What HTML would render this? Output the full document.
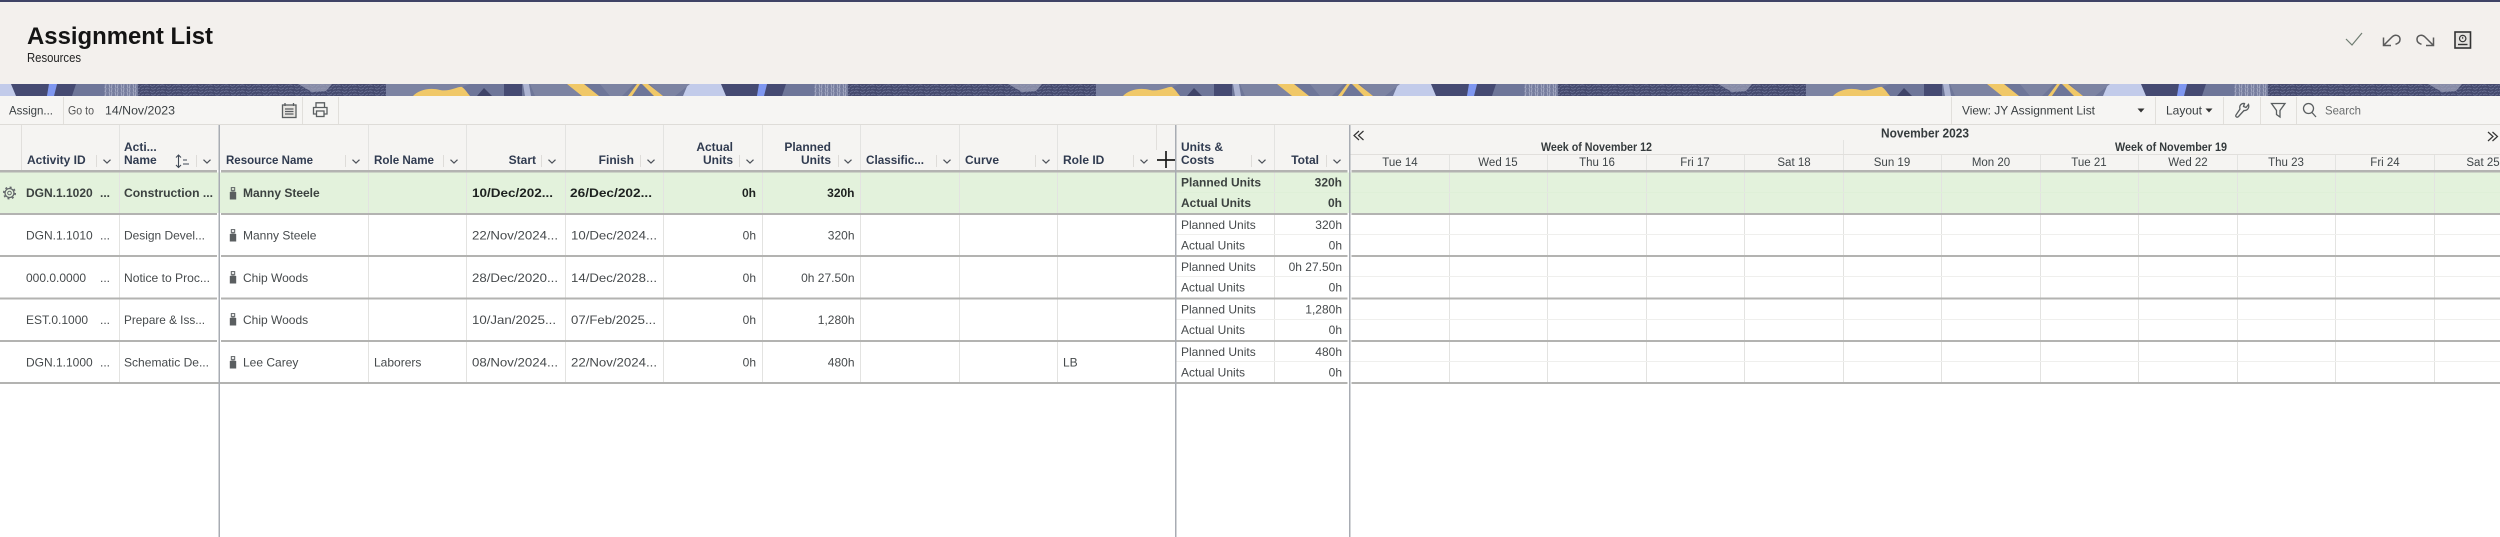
<!DOCTYPE html>
<html><head><meta charset="utf-8"><title>Assignment List</title>
<style>
html,body{margin:0;padding:0;background:#fff;width:2500px;height:537px;overflow:hidden}
svg{display:block;font-family:"Liberation Sans",sans-serif;filter:blur(.35px)}
.h{font-size:12px;font-weight:700;fill:#303b50}
.d{font-size:12px;fill:#464a4c}
.b{font-size:12px;font-weight:700;fill:#3c4240}
.k{font-size:12px;font-weight:700;fill:#1e2220}
.t{font-size:12px;fill:#3a3f42}
.g{font-size:11.5px;fill:#3f4548}
.gb{font-size:12px;font-weight:700;fill:#353b3d}
.e{text-anchor:end}
.m{text-anchor:middle}
.ic{fill:none;stroke:#5a5e60;stroke-width:1.3}
</style></head><body>
<svg width="2500" height="537" viewBox="0 0 2500 537" xmlns="http://www.w3.org/2000/svg">
<defs>
<pattern id="tx" width="16" height="6" patternUnits="userSpaceOnUse"><rect width="16" height="6" fill="#454a6e"/><path d="M0 2C1.500 .6 3 .6 4.500 1.800M6 1.200C8 2.800 9 2.600 11 1M12 2.600L15.500 .8M1 5C2.500 3.600 4 3.800 5.500 4.800M7 4.400C9 5.600 10 5.400 12 3.800M13 5.400L16 4" stroke="#70779a" stroke-width=".7" fill="none"/></pattern>
<pattern id="tl" width="6" height="4" patternUnits="userSpaceOnUse"><rect width="6" height="4" fill="#777e9f"/><path d="M1 0L2 4M4 0L3.500 4" stroke="#aeb3cb" stroke-width=".8"/></pattern>
<pattern id="tile" width="710" height="12" patternUnits="userSpaceOnUse" x="0" y="84">
<rect width="710" height="12" fill="#6e7699"/>
<path d="M0 0H13L20 12H0ZM688 0H710V12H683Z" fill="#c2cbea"/>
<path d="M11 0H49L47 12H16ZM57 0H76L72 12H54Z" fill="#454a72"/>
<path d="M49 0H57L54 12H47Z" fill="#7f97f0"/>
<rect x="104" width="36" height="12" fill="url(#tl)"/>
<rect x="138" width="248" height="12" fill="url(#tx)"/>
<path d="M298 0H332L326 7 312 8Z" fill="#a4a9c0" opacity=".7"/>
<path d="M386 0H470L440 12H386ZM530 0H566L590 12H535ZM600 0H634L622 12H610ZM650 0H690L675 12H662Z" fill="#7c83a2"/>
<path d="M413 12C418 6 430 3 440 6C450 8 458 2 462 3C466 6 468 10 470 12Z" fill="#f0c868"/>
<path d="M477 12L484 4 492 12Z" fill="#3f4468"/>
<path d="M504 0H522V12H504Z" fill="#454a72"/>
<path d="M523 0H529L531 12H525Z" fill="#adb4d2"/>
<path d="M567 0H584L599 12H582ZM628 12L637 0H640L632 12ZM642 0H648L663 12H654Z" fill="#f0c868"/>
</pattern>
<g id="p"><path d="M2.300 .6H5.700V3.400H2.300Z" fill="none" stroke="#5a5e60" stroke-width="1"/><path d="M.8 5Q4 3.400 7.200 5V12.500H.8Z" fill="#5a5e60"/></g>
<g id="v"><path d="M-3.500 -1.800L0 1.600 3.500 -1.800" fill="none" stroke="#4b5058" stroke-width="1.200"/></g>
</defs>

<!-- page header -->
<rect width="2500" height="84" fill="#f3f0ed"/>
<rect width="2500" height="2" fill="#3f4466"/>
<text x="27" y="44" font-size="24" font-weight="700" fill="#141414" textLength="186" lengthAdjust="spacingAndGlyphs">Assignment List</text>
<text x="27" y="62" font-size="12.500" fill="#222" textLength="54" lengthAdjust="spacingAndGlyphs">Resources</text>
<path d="M2346 39L2352 45 2362 33" fill="none" stroke="#6f7d72" stroke-width="1.200"/>
<path d="M2383.500 37.500V45.500H2391M2383.500 45.500L2392 37C2395 34 2400 35 2400 39.500C2400 41.800 2398 43.500 2395.500 44.300" fill="none" stroke="#5a5a5a" stroke-width="1.500"/>
<path d="M2433.500 37.500V45.500H2426M2433.500 45.500L2425 37C2422 34 2417 35 2417 39.500C2417 41.800 2419 43.500 2421.500 44.300" fill="none" stroke="#5a5a5a" stroke-width="1.500"/>
<rect x="2455" y="32" width="15.500" height="16" fill="#e6e4e1" stroke="#333" stroke-width="1.600"/>
<circle cx="2462.700" cy="38.500" r="3.200" fill="none" stroke="#333" stroke-width="1.200"/>
<path d="M2458 44.500H2467.500" stroke="#333" stroke-width="1.400"/>
<path d="M2462.700 36.800V38.800" stroke="#333"/>

<!-- banner -->
<rect y="84" width="2500" height="12" fill="url(#tile)"/>

<!-- toolbar -->
<rect y="96" width="2500" height="29" fill="#f6f5f3"/>
<rect y="124" width="2500" height="1" fill="#dedcd8"/>
<path d="M63.500 97V124M302.500 97V124M338.500 97V124M1951.500 97V124M2155.500 97V124M2223.500 97V124M2260.500 97V124M2296.500 97V124" stroke="#e1dfdb"/>
<text x="9" y="114.500" class="t" textLength="44" lengthAdjust="spacingAndGlyphs">Assign...</text>
<text x="68" y="114.500" class="t" style="fill:#555" textLength="26" lengthAdjust="spacingAndGlyphs">Go to</text>
<text x="105" y="114.500" class="t" textLength="70" lengthAdjust="spacingAndGlyphs">14/Nov/2023</text>
<g class="ic"><rect x="282.500" y="105" width="13.500" height="12.500" fill="#e8e6e2"/><path d="M285 103V106M293.500 103V106M285 109H293.500M285 111.500H293.500M285 114H293.500"/></g>
<g class="ic"><path d="M316 107V102.800H324.500V107M316 114H313.500V107.500H327V114H324.500"/><rect x="316.500" y="111" width="7.500" height="5.500"/></g>
<text x="1962" y="114.500" class="t" textLength="133" lengthAdjust="spacingAndGlyphs">View: JY Assignment List</text>
<path d="M2137.500 108.500H2144.500L2141 112.500Z" fill="#333"/>
<text x="2166" y="114.500" class="t" textLength="36" lengthAdjust="spacingAndGlyphs">Layout</text>
<path d="M2205.500 108.500H2212.500L2209 112.500Z" fill="#333"/>
<path class="ic" d="M2236 115C2235 116.500 2237 118 2238.500 116.500L2244 110.500C2247.500 111 2249.500 107.500 2248.500 104.500L2246 107.500 2243.500 106.500 2244.500 103.500C2241 103 2239 106 2240 109Z"/>
<path class="ic" d="M2271.500 103.500H2285L2280 110.500V117L2276.500 114.500V110.500Z"/>
<circle class="ic" cx="2308.500" cy="108.500" r="5"/><path class="ic" d="M2312 112.500L2316 117"/>
<text x="2325" y="114.500" class="t" style="fill:#6a6d6e" textLength="36" lengthAdjust="spacingAndGlyphs">Search</text>

<!-- column header background -->
<rect y="125" width="2500" height="45" fill="#f5f4f2"/>

<!-- selected row background -->
<rect y="172" width="2500" height="41" fill="#e3f2dc"/>

<!-- vertical column lines: headers + rows -->
<path d="M21.500 125V170M1156.500 125V150" stroke="#e1dfdc"/>
<path d="M119.500 125V382M368.500 125V382M466.500 125V382M565.500 125V382M663.500 125V382M762.500 125V382M860.500 125V382M959.500 125V382M1057.500 125V382M1274.500 125V382M1449.500 154V382M1547.500 154V382M1646.500 154V382M1744.500 154V382M1843.500 140V382M1941.500 154V382M2040.500 154V382M2138.500 154V382M2237.500 154V382M2335.500 154V382M2434.500 154V382" stroke="#e3e3e1"/>

<!-- gantt header line -->
<rect x="1350" y="154" width="1150" height="1" fill="#e1dfdc"/>

<!-- sub-row lines -->
<path d="M1176 192.500H2500" stroke="#dff0d8"/>
<path d="M1176 234.500H2500M1176 276.500H2500M1176 319.500H2500M1176 361.500H2500" stroke="#efefed"/>

<!-- horizontal thick lines -->
<g fill="#b3b3b1">
<rect y="170" width="2500" height="2.500"/>
<rect y="213" width="2500" height="2"/>
<rect y="255" width="2500" height="2"/>
<rect y="297.500" width="2500" height="2"/>
<rect y="340" width="2500" height="2"/>
<rect y="382" width="2500" height="2"/>
</g>
<!-- gaps in horizontal lines around dividers -->
<g fill="#fff">
<rect x="217" y="170" width="4" height="2.500"/><rect x="217" y="213" width="4" height="2"/><rect x="217" y="255" width="4" height="2"/><rect x="217" y="297.500" width="4" height="2"/><rect x="217" y="340" width="4" height="2"/>
<rect x="1347.500" y="170" width="4" height="2.500"/><rect x="1347.500" y="213" width="4" height="2"/><rect x="1347.500" y="255" width="4" height="2"/><rect x="1347.500" y="297.500" width="4" height="2"/><rect x="1347.500" y="340" width="4" height="2"/><rect x="1347.500" y="382" width="4" height="2"/>
</g>

<!-- thick vertical dividers -->
<g fill="#a8acb3">
<rect x="218.500" y="125" width="1.500" height="412"/>
<rect x="1175" y="125" width="1.500" height="412"/>
<rect x="1349" y="125" width="1.500" height="412"/>
</g>

<!-- column header text -->
<text x="124" y="151" class="h">Acti...</text>
<text x="124" y="164" class="h">Name</text>
<text x="27" y="164" class="h">Activity ID</text>
<text x="226" y="164" class="h" textLength="87" lengthAdjust="spacingAndGlyphs">Resource Name</text>
<text x="374" y="164" class="h" textLength="60" lengthAdjust="spacingAndGlyphs">Role Name</text>
<text x="536" y="164" class="h e">Start</text>
<text x="634" y="164" class="h e">Finish</text>
<text x="733" y="151" class="h e">Actual</text>
<text x="733" y="164" class="h e">Units</text>
<text x="831" y="151" class="h e">Planned</text>
<text x="831" y="164" class="h e">Units</text>
<text x="866" y="164" class="h" textLength="58" lengthAdjust="spacingAndGlyphs">Classific...</text>
<text x="965" y="164" class="h">Curve</text>
<text x="1063" y="164" class="h">Role ID</text>
<text x="1181" y="151" class="h">Units &amp;</text>
<text x="1181" y="164" class="h">Costs</text>
<text x="1319" y="164" class="h e">Total</text>

<!-- sort icon -->
<path d="M178.500 155.500V167M176 157.500L178.500 155 181 157.500M176 165L178.500 167.500 181 165M183 160H187M183 164H189" fill="none" stroke="#3f4855" stroke-width="1.100"/>

<!-- header separators -->
<path d="M96.500 155V167M196.500 155V167M345.500 155V167M443.500 155V167M541.500 155V167M640.500 155V167M739.500 155V167M838.500 155V167M936.500 155V167M1035.500 155V167M1133.500 155V167M1251.500 155V167M1326.500 155V167" stroke="#dedcd9"/>
<!-- chevrons -->
<use href="#v" x="107" y="161.500"/><use href="#v" x="207" y="161.500"/><use href="#v" x="356" y="161.500"/><use href="#v" x="454" y="161.500"/><use href="#v" x="552" y="161.500"/><use href="#v" x="651" y="161.500"/><use href="#v" x="750" y="161.500"/><use href="#v" x="848" y="161.500"/><use href="#v" x="947" y="161.500"/><use href="#v" x="1046" y="161.500"/><use href="#v" x="1144" y="161.500"/><use href="#v" x="1262" y="161.500"/><use href="#v" x="1337" y="161.500"/>

<!-- plus cursor -->
<path d="M1166 151V168M1157 160H1175" stroke="#1c1c1c" stroke-width="1.700"/>

<!-- gantt header -->
<text x="1925" y="137.500" class="gb m" style="font-size:13px" textLength="88" lengthAdjust="spacingAndGlyphs">November 2023</text>
<text x="1541" y="151" class="gb" style="font-size:11.500px" textLength="111" lengthAdjust="spacingAndGlyphs">Week of November 12</text>
<text x="2115" y="151" class="gb" style="font-size:11.500px" textLength="112" lengthAdjust="spacingAndGlyphs">Week of November 19</text>
<path d="M1359 131L1354 135.500 1359 140M1363.500 131L1358.500 135.500 1363.500 140" fill="none" stroke="#333" stroke-width="1.200"/>
<path d="M2488 132L2493 136.500 2488 141M2492.500 132L2497.500 136.500 2492.500 141" fill="none" stroke="#333" stroke-width="1.200"/>
<g class="g m">
<text x="1400" y="166">Tue 14</text><text x="1498" y="166">Wed 15</text><text x="1597" y="166">Thu 16</text><text x="1695" y="166">Fri 17</text><text x="1794" y="166">Sat 18</text><text x="1892" y="166">Sun 19</text><text x="1991" y="166">Mon 20</text><text x="2089" y="166">Tue 21</text><text x="2188" y="166">Wed 22</text><text x="2286" y="166">Thu 23</text><text x="2385" y="166">Fri 24</text><text x="2483" y="166">Sat 25</text>
</g>

<!-- gear -->
<g fill="none" stroke="#62666a"><circle cx="9.500" cy="193" r="4.500" stroke-width="1.300"/><circle cx="9.500" cy="193" r="1.800" stroke-width="1"/><circle cx="9.500" cy="193" r="5.800" stroke-width="1.500" stroke-dasharray="2 2.550"/></g>

<!-- person icons -->
<use href="#p" x="229" y="187"/><use href="#p" x="229" y="229"/><use href="#p" x="229" y="271"/><use href="#p" x="229" y="313"/><use href="#p" x="229" y="356"/>

<!-- row 1 -->
<text x="26" y="197" class="b">DGN.1.1020</text><text x="100" y="197" class="b">...</text>
<text x="124" y="197" class="b" textLength="89" lengthAdjust="spacingAndGlyphs">Construction ...</text>
<text x="243" y="197" class="b">Manny Steele</text>
<text x="472" y="197" class="k" textLength="81" lengthAdjust="spacingAndGlyphs">10/Dec/202...</text>
<text x="570" y="197" class="k" textLength="82" lengthAdjust="spacingAndGlyphs">26/Dec/202...</text>
<text x="756" y="197" class="k e">0h</text><text x="854.500" y="197" class="k e">320h</text>
<text x="1181" y="186.500" class="b">Planned Units</text><text x="1342" y="186.500" class="b e">320h</text>
<text x="1181" y="207" class="b">Actual Units</text><text x="1342" y="207" class="b e">0h</text>

<!-- row 2 -->
<text x="26" y="239.500" class="d">DGN.1.1010</text><text x="100" y="239.500" class="d">...</text>
<text x="124" y="239.500" class="d" textLength="81" lengthAdjust="spacingAndGlyphs">Design Devel...</text>
<text x="243" y="239.500" class="d">Manny Steele</text>
<text x="472" y="239.500" class="d" textLength="86" lengthAdjust="spacingAndGlyphs">22/Nov/2024...</text>
<text x="571" y="239.500" class="d" textLength="86" lengthAdjust="spacingAndGlyphs">10/Dec/2024...</text>
<text x="756" y="239.500" class="d e">0h</text><text x="854.500" y="239.500" class="d e">320h</text>
<text x="1181" y="229" class="d">Planned Units</text><text x="1342" y="229" class="d e">320h</text>
<text x="1181" y="249.500" class="d">Actual Units</text><text x="1342" y="249.500" class="d e">0h</text>

<!-- row 3 -->
<text x="26" y="282" class="d">000.0.0000</text><text x="100" y="282" class="d">...</text>
<text x="124" y="282" class="d" textLength="86" lengthAdjust="spacingAndGlyphs">Notice to Proc...</text>
<text x="243" y="282" class="d">Chip Woods</text>
<text x="472" y="282" class="d" textLength="86" lengthAdjust="spacingAndGlyphs">28/Dec/2020...</text>
<text x="571" y="282" class="d" textLength="86" lengthAdjust="spacingAndGlyphs">14/Dec/2028...</text>
<text x="756" y="282" class="d e">0h</text><text x="854.500" y="282" class="d e">0h 27.50n</text>
<text x="1181" y="271" class="d">Planned Units</text><text x="1342" y="271" class="d e">0h 27.50n</text>
<text x="1181" y="291.500" class="d">Actual Units</text><text x="1342" y="291.500" class="d e">0h</text>

<!-- row 4 -->
<text x="26" y="324" class="d">EST.0.1000</text><text x="100" y="324" class="d">...</text>
<text x="124" y="324" class="d" textLength="81" lengthAdjust="spacingAndGlyphs">Prepare &amp; Iss...</text>
<text x="243" y="324" class="d">Chip Woods</text>
<text x="472" y="324" class="d" textLength="84" lengthAdjust="spacingAndGlyphs">10/Jan/2025...</text>
<text x="571" y="324" class="d" textLength="85" lengthAdjust="spacingAndGlyphs">07/Feb/2025...</text>
<text x="756" y="324" class="d e">0h</text><text x="854.500" y="324" class="d e">1,280h</text>
<text x="1181" y="313.500" class="d">Planned Units</text><text x="1342" y="313.500" class="d e">1,280h</text>
<text x="1181" y="334" class="d">Actual Units</text><text x="1342" y="334" class="d e">0h</text>

<!-- row 5 -->
<text x="26" y="366.500" class="d">DGN.1.1000</text><text x="100" y="366.500" class="d">...</text>
<text x="124" y="366.500" class="d" textLength="85" lengthAdjust="spacingAndGlyphs">Schematic De...</text>
<text x="243" y="366.500" class="d">Lee Carey</text>
<text x="374" y="366.500" class="d">Laborers</text>
<text x="472" y="366.500" class="d" textLength="86" lengthAdjust="spacingAndGlyphs">08/Nov/2024...</text>
<text x="571" y="366.500" class="d" textLength="86" lengthAdjust="spacingAndGlyphs">22/Nov/2024...</text>
<text x="756" y="366.500" class="d e">0h</text><text x="854.500" y="366.500" class="d e">480h</text>
<text x="1063" y="366.500" class="d">LB</text>
<text x="1181" y="356" class="d">Planned Units</text><text x="1342" y="356" class="d e">480h</text>
<text x="1181" y="376.500" class="d">Actual Units</text><text x="1342" y="376.500" class="d e">0h</text>
</svg>
</body></html>
